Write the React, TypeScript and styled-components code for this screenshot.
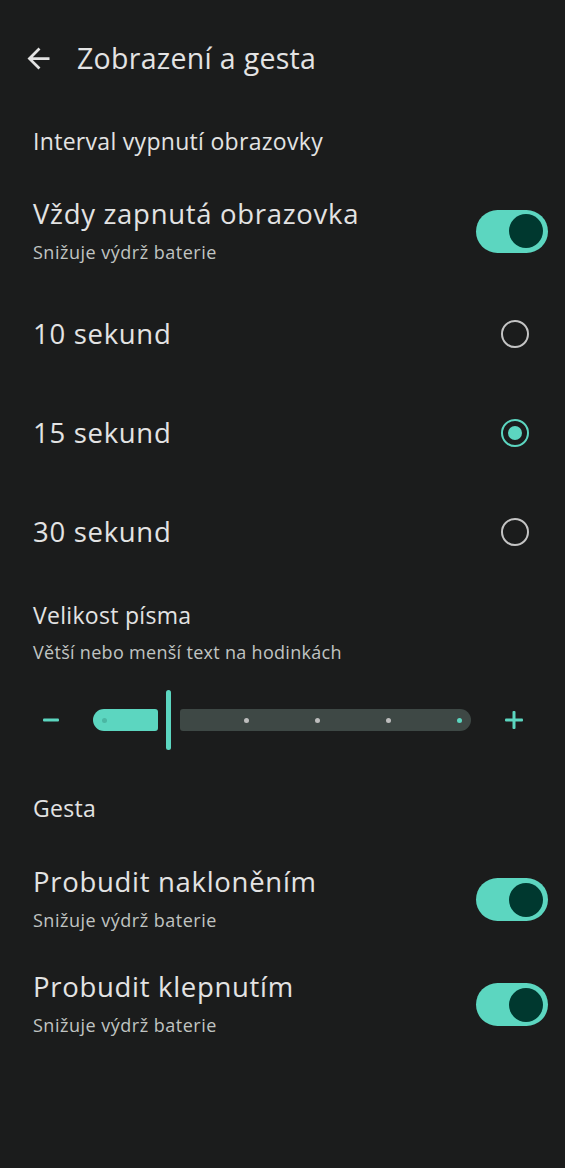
import React from "react";
import styled, { createGlobalStyle } from "styled-components";

const ACCENT = "#5cd6c0";
const THUMB = "#00382f";
const TEXT = "#e3e3e3";
const SUB = "#c0c4c2";
const BG = "#1b1c1c";

const Global = createGlobalStyle`
  *, *::before, *::after { box-sizing: border-box; }
  html, body { margin: 0; padding: 0; background: ${BG}; }
  body { font-family: "Open Sans", Roboto, sans-serif; color: ${TEXT}; }
`;

const Page = styled.div`
  width: 565px;
  height: 1168px;
  background: ${BG};
  display: flex;
  flex-direction: column;
`;

const Header = styled.header`
  height: 116px;
  display: flex;
  align-items: center;
  padding-left: 22px;
  gap: 22px;
`;

const BackIcon = styled.svg`
  width: 33px;
  height: 33px;
  fill: ${TEXT};
  flex: none;
`;

const Title = styled.h1`
  margin: 0;
  font-size: 28.5px;
  font-weight: 400;
  letter-spacing: 0.3px;
  color: ${TEXT};
`;

const SectionLabel = styled.div<{ $h: number; $pt?: number }>`
  height: ${(p) => p.$h}px;
  padding: ${(p) => p.$pt ?? 0}px 33px 0;
  display: flex;
  align-items: ${(p) => (p.$pt ? "flex-start" : "center")};
  font-size: 23px;
  letter-spacing: 0.3px;
  line-height: 30px;
  color: ${TEXT};
`;

const Row = styled.div<{ $h: number; $pt?: number }>`
  height: ${(p) => p.$h}px;
  padding: ${(p) => p.$pt ?? 0}px 17px 0 33px;
  display: flex;
  align-items: center;
  justify-content: space-between;
`;

const TextBlock = styled.div`
  display: flex;
  flex-direction: column;
  gap: 8px;
`;

const RowTitle = styled.div`
  font-size: 27.5px;
  letter-spacing: 0.7px;
  line-height: 34px;
  color: ${TEXT};
`;

const RowSub = styled.div`
  font-size: 18px;
  letter-spacing: 0.5px;
  line-height: 27px;
  color: ${SUB};
`;

const Track = styled.div`
  width: 72px;
  height: 43px;
  border-radius: 22px;
  background: ${ACCENT};
  display: flex;
  align-items: center;
  justify-content: flex-end;
  padding-right: 5px;
  flex: none;
`;

const Knob = styled.div`
  width: 34px;
  height: 34px;
  border-radius: 50%;
  background: ${THUMB};
`;

const ControlSlot = styled.div`
  width: 72px;
  display: flex;
  justify-content: center;
  padding-left: 6px;
`;

const RadioRing = styled.div<{ $on?: boolean }>`
  width: 28px;
  height: 28px;
  border-radius: 50%;
  border: 2.5px solid ${(p) => (p.$on ? ACCENT : "#c4c4c4")};
  display: flex;
  align-items: center;
  justify-content: center;
`;

const RadioDot = styled.div`
  width: 14px;
  height: 14px;
  border-radius: 50%;
  background: ${ACCENT};
`;

const FontBlock = styled.div`
  padding: 19px 33px 0;
  display: flex;
  flex-direction: column;
  gap: 10px;
`;

const BlockTitle = styled.div`
  font-size: 23px;
  letter-spacing: 0.3px;
  line-height: 30px;
  color: ${TEXT};
`;

const BlockSub = styled.div`
  font-size: 18px;
  letter-spacing: 0.3px;
  line-height: 24px;
  color: ${SUB};
`;

const SliderRow = styled.div`
  margin-top: 26px;
  height: 60px;
  display: flex;
  align-items: center;
  padding-left: 33px;
`;

const StepButton = styled.div<{ $w: number }>`
  width: ${(p) => p.$w}px;
  height: 60px;
  display: flex;
  align-items: center;
  justify-content: center;
  flex: none;
`;

const Active = styled.div`
  width: 65px;
  height: 22px;
  margin-left: 24px;
  border-radius: 11px 3px 3px 11px;
  background: ${ACCENT};
  display: flex;
  align-items: center;
  padding-left: 9px;
`;

const Handle = styled.div`
  width: 5px;
  height: 60px;
  border-radius: 3px;
  background: ${ACCENT};
  margin: 0 9px 0 8px;
`;

const Inactive = styled.div`
  width: 291px;
  height: 22px;
  border-radius: 3px 11px 11px 3px;
  background: #3e4845;
  display: flex;
  align-items: center;
  padding-left: 64px;
  gap: 66px;
`;

const Tick = styled.div<{ $c: string }>`
  width: 5px;
  height: 5px;
  border-radius: 50%;
  background: ${(p) => p.$c};
  flex: none;
`;

const ArrowBack = () => (
  <BackIcon viewBox="0 0 24 24">
    <path d="M20 11H7.83l5.59-5.59L12 4l-8 8 8 8 1.41-1.41L7.83 13H20v-2z" />
  </BackIcon>
);

const Toggle = () => (
  <Track>
    <Knob />
  </Track>
);

const SwitchRow = ({ title, sub, h, pt }: { title: string; sub: string; h: number; pt?: number }) => (
  <Row $h={h} $pt={pt}>
    <TextBlock>
      <RowTitle>{title}</RowTitle>
      <RowSub>{sub}</RowSub>
    </TextBlock>
    <Toggle />
  </Row>
);

const RadioRow = ({ label, on }: { label: string; on?: boolean }) => (
  <Row $h={99}>
    <RowTitle>{label}</RowTitle>
    <ControlSlot>
      <RadioRing $on={on}>{on && <RadioDot />}</RadioRing>
    </ControlSlot>
  </Row>
);

export default function App() {
  return (
    <>
      <Global />
      <Page>
        <Header>
          <ArrowBack />
          <Title>Zobrazení a gesta</Title>
        </Header>
        <SectionLabel $h={50}>Interval vypnutí obrazovky</SectionLabel>
        <SwitchRow title="Vždy zapnutá obrazovka" sub="Snižuje výdrž baterie" h={118} pt={12} />
        <RadioRow label="10 sekund" />
        <RadioRow label="15 sekund" on />
        <RadioRow label="30 sekund" />
        <FontBlock>
          <BlockTitle>Velikost písma</BlockTitle>
          <BlockSub>Větší nebo menší text na hodinkách</BlockSub>
        </FontBlock>
        <SliderRow>
          <StepButton $w={36}>
            <svg width="16" height="4" viewBox="0 0 16 4">
              <rect x="0" y="0.5" width="16" height="3" rx="1" fill={ACCENT} />
            </svg>
          </StepButton>
          <Active>
            <Tick $c="#4bb7a3" />
          </Active>
          <Handle />
          <Inactive>
            <Tick $c="#bdbdbd" />
            <Tick $c="#bdbdbd" />
            <Tick $c="#bdbdbd" />
            <Tick $c={ACCENT} />
          </Inactive>
          <StepButton $w={86}>
            <svg width="18" height="18" viewBox="0 0 18 18">
              <rect x="0" y="7.5" width="18" height="3" rx="1" fill={ACCENT} />
              <rect x="7.5" y="0" width="3" height="18" rx="1" fill={ACCENT} />
            </svg>
          </StepButton>
        </SliderRow>
        <SectionLabel $h={97} $pt={43}>Gesta</SectionLabel>
        <SwitchRow title="Probudit nakloněním" sub="Snižuje výdrž baterie" h={105} />
        <SwitchRow title="Probudit klepnutím" sub="Snižuje výdrž baterie" h={105} />
      </Page>
    </>
  );
}
